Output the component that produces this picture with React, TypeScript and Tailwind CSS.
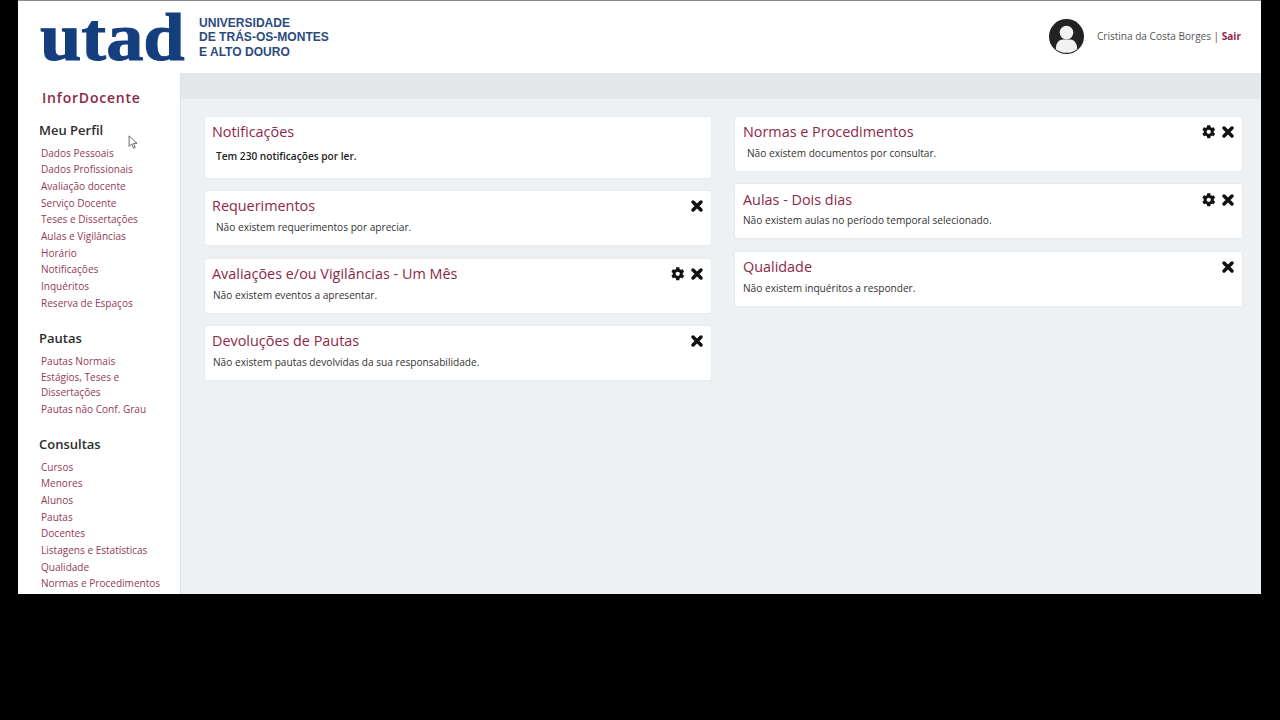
import { FaCog } from "react-icons/fa";

const crimson = "text-[#8c2848]";

function CloseIcon() {
  return (
    <svg viewBox="0 0 14 14" className="w-[14px] h-[14px]">
      <path d="M3 3 11 11M11 3 3 11" stroke="#111" strokeWidth="3.5" strokeLinecap="round" />
    </svg>
  );
}

function Section({ title, items, className }: { title: string; items: string[]; className: string }) {
  return (
    <div className={className}>
      <h3 className="text-[13px] leading-[18px] font-semibold text-[#2c2c2c] pl-[21px] mb-[6.5px]">{title}</h3>
      <ul className="pl-[23px] pr-2">
        {items.map((i) => (
          <li key={i} className="text-[10.05px] leading-[15px] mb-[1.7px] text-[#92395a]">{i}</li>
        ))}
      </ul>
    </div>
  );
}

function Card({ title, text, gear, close, bold, h, mb, pl, titlePt, px, textMt }: { title: string; text: string; gear?: boolean; close?: boolean; bold?: boolean; h: string; mb: string; pl: string; titlePt: string; px: string; textMt: string }) {
  return (
    <div className={`bg-white rounded-[2px] shadow-[0_0_2px_rgba(0,0,0,0.08)] pr-[7px] ${px} ${titlePt} ${h} ${mb}`}>
      <div className="flex items-center justify-between h-[18px]">
        <h2 className={`text-[14.4px] leading-[18px] ${crimson}`}>{title}</h2>
        <div className="flex items-center gap-[5.5px]">
          {gear && <FaCog className="w-[13.5px] h-[13.5px] text-[#111]" />}
          {close && <CloseIcon />}
        </div>
      </div>
      <p className={`text-[10.15px] leading-[14px] ${textMt} ${pl} ${bold ? "font-semibold text-[#222]" : "text-[#333]"}`}>{text}</p>
    </div>
  );
}

export default function App() {
  return (
    <div className="w-[1280px] h-[720px] bg-black overflow-hidden font-['Open_Sans',sans-serif]">
      <div className="relative ml-[18px] w-[1243px] h-[594px] bg-white border-t border-[#8a8a8a] flex flex-col overflow-hidden">
        <header className="h-[72px] shrink-0 flex items-center justify-between pl-[22px] pr-[20px] bg-white">
          <div className="flex items-center">
            <span className="font-['Liberation_Serif',serif] font-bold text-[#153e7e] text-[67px] leading-[80px] mt-[0px] scale-x-[1.11] origin-left w-[159px] [-webkit-text-stroke:1px_#153e7e]">utad</span>
            <div className="font-['Liberation_Sans',sans-serif] font-bold text-[#2b4a80] text-[12.05px] leading-[14.5px] mt-[1px]">
              <div>UNIVERSIDADE</div>
              <div>DE TRÁS-OS-MONTES</div>
              <div>E ALTO DOURO</div>
            </div>
          </div>
          <div className="flex items-center gap-[13px] -mt-[1px]">
            <svg viewBox="0 0 36 36" className="w-[35px] h-[35px]">
              <circle cx="18" cy="18" r="18" fill="#222" />
              <circle cx="18" cy="14" r="7" fill="#f2f2f2" />
              <path d="M7 31c0-7 4-10 7-10h8c3 0 7 3 7 10a18 18 0 0 1-22 0z" fill="#f2f2f2" />
            </svg>
            <span className="text-[10.05px] text-[#555]">Cristina da Costa Borges | <b className="text-[#8f2a4e]">Sair</b></span>
          </div>
        </header>
        <div className="flex flex-1 min-h-0">
          <aside className="w-[163px] shrink-0 bg-white border-r border-[#dfe3e8] overflow-hidden">
            <div className={`text-[14px] leading-[20px] font-semibold tracking-[0.8px] pl-[24px] pt-[15px] ${crimson}`}>InforDocente</div>
            <Section className="mt-[13px]" title="Meu Perfil" items={["Dados Pessoais","Dados Profissionais","Avaliação docente","Serviço Docente","Teses e Dissertações","Aulas e Vigilâncias","Horário","Notificações","Inquéritos","Reserva de Espaços"]} />
            <Section className="mt-[18.5px]" title="Pautas" items={["Pautas Normais","Estágios, Teses e Dissertações","Pautas não Conf. Grau"]} />
            <Section className="mt-[18px]" title="Consultas" items={["Cursos","Menores","Alunos","Pautas","Docentes","Listagens e Estatísticas","Qualidade","Normas e Procedimentos"]} />
          </aside>
          <main className="flex-1 bg-[#eef1f4] min-w-0">
            <div className="h-[26px] bg-[#e5e8eb]" />
            <div className="grid grid-cols-[506px_507px] gap-x-[24px] pl-[24px] pt-[18px]">
              <div>
                <Card h="h-[61px]" mb="mb-[13px]" titlePt="pt-[6px]" px="pl-[7px]" textMt="mt-[8px]" pl="pl-[4px]" bold title="Notificações" text="Tem 230 notificações por ler." />
                <Card h="h-[54px]" mb="mb-[14px]" titlePt="pt-[6px]" px="pl-[7px]" textMt="mt-[5px]" pl="pl-[4px]" close title="Requerimentos" text="Não existem requerimentos por apreciar." />
                <Card h="h-[54px]" mb="mb-[13px]" titlePt="pt-[6px]" px="pl-[7px]" textMt="mt-[5px]" pl="pl-[1px]" gear close title="Avaliações e/ou Vigilâncias - Um Mês" text="Não existem eventos a apresentar." />
                <Card h="h-[54px]" mb="" titlePt="pt-[6px]" px="pl-[7px]" textMt="mt-[5px]" pl="pl-[1px]" close title="Devoluções de Pautas" text="Não existem pautas devolvidas da sua responsabilidade." />
              </div>
              <div>
                <Card h="h-[54px]" mb="mb-[13px]" titlePt="pt-[6px]" px="pl-[8px]" textMt="mt-[5px]" pl="pl-[4px]" gear close title="Normas e Procedimentos" text="Não existem documentos por consultar." />
                <Card h="h-[54px]" mb="mb-[14px]" titlePt="pt-[7px]" px="pl-[8px]" textMt="mt-[4px]" pl="" gear close title="Aulas - Dois dias" text="Não existem aulas no período temporal selecionado." />
                <Card h="h-[54px]" mb="" titlePt="pt-[6px]" px="pl-[8px]" textMt="mt-[5px]" pl="" close title="Qualidade" text="Não existem inquéritos a responder." />
              </div>
            </div>
          </main>
        </div>
        <svg viewBox="0 0 12 17" className="absolute left-[110px] top-[134px] w-[11px] h-[15px]">
          <path d="M1 1v12l3-3 2 5 2-1-2-4.5h4z" fill="#fff" stroke="#555" strokeWidth="1" />
        </svg>
      </div>
    </div>
  );
}
